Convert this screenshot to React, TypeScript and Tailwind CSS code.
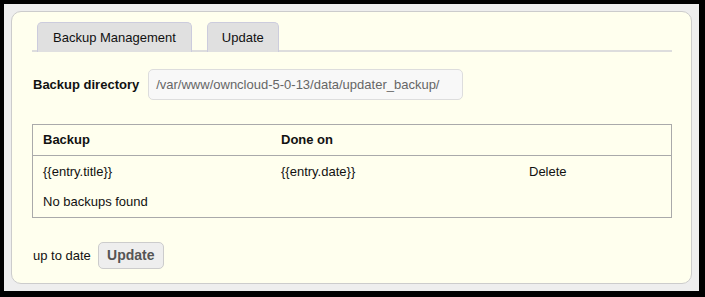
import React from 'react';

const entries = [{ title: '{{entry.title}}', date: '{{entry.date}}' }];

export default function App() {
  return (
    <div className="w-[705px] h-[297px] bg-black pt-[4px] pl-[4px] pr-[6px] pb-[6px] font-['Liberation_Sans',Arial,sans-serif] text-[13px] text-[#111]">
      <div className="h-full bg-[#eeeeee] p-[7px]">
        <div className="h-full rounded-[10px] border border-[#cccccc] bg-[#ffffee] pl-[20px] pr-[19px] pt-[10px]">
          {/* tabs */}
          <div className="flex h-[30px] items-end gap-[15px] border-b-[2px] border-[#dddddd] pl-[5px]">
            <div className="flex h-[30px] mb-[-2px] items-center rounded-t-[5px] border border-b-0 border-[#ccccdd] bg-[#e0e0e0] px-[15px]">
              Backup Management
            </div>
            <div className="flex h-[30px] mb-[-2px] items-center rounded-t-[5px] border border-b-0 border-[#ccccdd] bg-[#e0e0e0] px-[14px]">
              Update
            </div>
          </div>

          {/* backup directory */}
          <div className="mt-[17px] flex items-center gap-[9px] pl-[1px]">
            <span className="font-bold">Backup directory</span>
            <div className="flex h-[31px] w-[315px] items-center rounded-[5px] border border-[#dddddd] bg-[#f8f8f8] px-[7px] text-[#666666]">
              /var/www/owncloud-5-0-13/data/updater_backup/
            </div>
          </div>

          {/* table */}
          <div className="mt-[24px] border border-[#aaaaaa]">
            <div className="flex h-[31px] items-center border-b border-[#aaaaaa] font-bold">
              <div className="w-[248px] pl-[10px]">Backup</div>
              <div className="w-[248px]">Done on</div>
              <div className="flex-1"></div>
            </div>
            {entries.map((e) => (
              <div key={e.title} className="flex h-[31px] items-center">
                <div className="w-[248px] pl-[10px]">{e.title}</div>
                <div className="w-[248px]">{e.date}</div>
                <div className="flex-1">Delete</div>
              </div>
            ))}
            <div className="flex h-[30px] items-center pl-[10px]">No backups found</div>
          </div>

          {/* update */}
          <div className="mt-[24px] flex items-center gap-[7px] pl-[1px]">
            <span>up to date</span>
            <button className="h-[27px] w-[66px] rounded-[5px] border border-[#cccccc] bg-[#eeeeee] text-[14px] font-bold text-[#555555]">
              Update
            </button>
          </div>
        </div>
      </div>
    </div>
  );
}
